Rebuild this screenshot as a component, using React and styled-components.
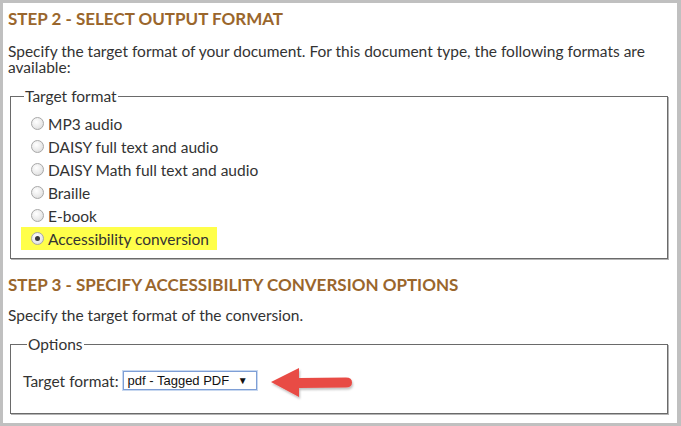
import React from "react";
import styled, { createGlobalStyle } from "styled-components";

const Global = createGlobalStyle`
  html, body {
    margin: 0;
    padding: 0;
    background: #fff;
  }
  body {
    font-family: Lato, "Open Sans", sans-serif;
    color: #333;
  }
`;

const Frame = styled.div`
  box-sizing: border-box;
  width: 681px;
  height: 426px;
  border: 3px solid #c0c0c0;
  border-right-width: 4px;
  padding: 6px 9px 0 5px;
  overflow: hidden;
`;

const Heading = styled.h2`
  margin: ${(p) => p.$top || 0}px 0 0;
  font-size: 17px;
  line-height: 20px;
  font-weight: 700;
  color: #9a662c;
  text-transform: uppercase;
`;

const Intro = styled.p`
  margin: ${(p) => p.$top || 11}px 0 0;
  font-size: 15.5px;
  line-height: 16px;
  color: #333;
  padding-right: 8px;
`;

const Group = styled.fieldset`
  margin: ${(p) => p.$top || 16}px 0 0 2px;
  padding: ${(p) => p.$pad || "0 0 8px 9px"};
  border: 1px solid #6a6a6a;
  box-shadow: 1px 1px 0 #b4b4b4;
  height: ${(p) => p.$h}px;
  box-sizing: border-box;
`;

const Legend = styled.legend`
  padding: 0 1px;
  margin-left: 4px;
  font-size: 15.5px;
  line-height: 16px;
`;

const OptionList = styled.div`
  display: flex;
  flex-direction: column;
  margin-top: 8px;
`;

const Option = styled.label`
  display: flex;
  align-items: center;
  gap: 4px;
  align-self: flex-start;
  height: 23px;
  margin-left: 1px;
  padding: 0 8px 0 10px;
  font-size: 15.5px;
  background: ${(p) => (p.$highlight ? "#ffff4a" : "transparent")};
`;

const Radio = styled.span`
  position: relative;
  width: 11px;
  height: 11px;
  border-radius: 50%;
  border: 1px solid #a8a8a8;
  background: radial-gradient(circle at 40% 35%, #ffffff 0%, #e8e8e8 60%, #d2d2d2 100%);
  flex: none;
  margin-top: -1px;

  &::after {
    content: "";
    display: ${(p) => (p.$checked ? "block" : "none")};
    position: absolute;
    left: 3px;
    top: 3px;
    width: 5px;
    height: 5px;
    border-radius: 50%;
    background: #3a3a3a;
  }
`;

const FieldRow = styled.div`
  display: flex;
  align-items: center;
  gap: 4px;
  font-size: 15.5px;
  position: relative;
`;

const Select = styled.div`
  display: flex;
  align-items: center;
  justify-content: space-between;
  box-sizing: border-box;
  width: 134px;
  height: 19px;
  padding: 0 8px 0 4px;
  border: 1px solid #7e9fd6;
  box-shadow: 0 0 0 1px #c8d8f0;
  font-family: "Liberation Sans", Arial, sans-serif;
  font-size: 13px;
  color: #111;
  background: #fff;
`;

const Caret = styled.span`
  font-size: 10px;
  color: #111;
`;

const Arrow = styled.svg`
  position: absolute;
  left: 237px;
  top: -5px;
`;

const formats = [
  "MP3 audio",
  "DAISY full text and audio",
  "DAISY Math full text and audio",
  "Braille",
  "E-book",
  "Accessibility conversion",
];

export default function App() {
  return (
    <>
      <Global />
      <Frame>
        <Heading>Step 2 - Select output format</Heading>
        <Intro $top={14}>
          Specify the target format of your document. For this document type,
          the following formats are available:
        </Intro>
        <Group $top={13} $h={171}>
          <Legend>Target format</Legend>
          <OptionList>
            {formats.map((f, i) => {
              const last = i === formats.length - 1;
              return (
                <Option key={f} $highlight={last}>
                  <Radio $checked={last} />
                  {f}
                </Option>
              );
            })}
          </OptionList>
        </Group>

        <Heading $top={16}>
          Step 3 - Specify accessibility conversion options
        </Heading>
        <Intro $top={12}>Specify the target format of the conversion.</Intro>
        <Group $top={13} $h={78} $pad="19px 0 0 12px">
          <Legend>Options</Legend>
          <FieldRow>
            Target format:
            <Select>
              pdf - Tagged PDF
              <Caret>▼</Caret>
            </Select>
            <Arrow width="96" height="36" viewBox="0 0 96 36">
              <defs>
                <filter id="sh" x="-10%" y="-20%" width="130%" height="150%">
                  <feDropShadow dx="1" dy="2" stdDeviation="1.2" floodColor="#000" floodOpacity="0.25" />
                </filter>
              </defs>
              <g filter="url(#sh)">
                <path
                  d="M11 16 L39 2 L39 12 L86 11.5 Q92 11.5 92 16.5 Q92 21.5 86 21.5 L39 22 L39 31 Z"
                  fill="#e84b45"
                />
              </g>
            </Arrow>
          </FieldRow>
        </Group>
      </Frame>
    </>
  );
}
